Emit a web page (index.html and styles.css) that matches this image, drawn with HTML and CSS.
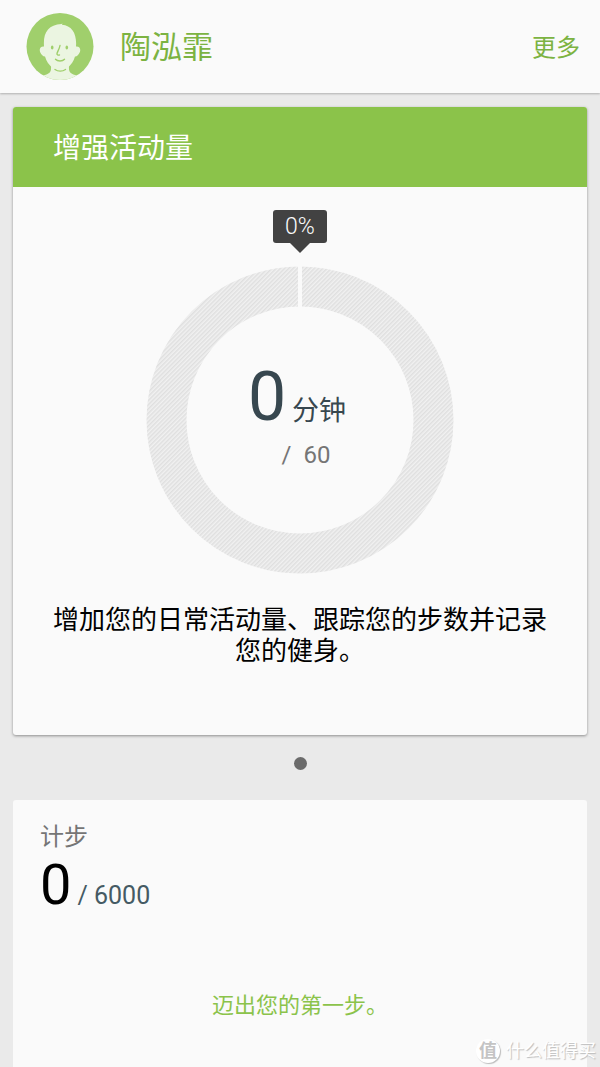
FILE: index.html
```html
<!DOCTYPE html>
<html lang="zh-CN">
<head>
<meta charset="utf-8">
<meta name="viewport" content="width=device-width, initial-scale=1">
<title>增强活动量</title>
<link rel="stylesheet" href="styles.css">
</head>
<body>
<header class="topbar">
  <svg class="avatar" viewBox="0 0 68 68" aria-hidden="true">
    <defs><clipPath id="face-clip"><circle cx="34" cy="34" r="33.5"/></clipPath></defs>
    <circle cx="34" cy="34" r="33.5" fill="#a0cf6c"/>
    <g clip-path="url(#face-clip)">
      <path fill="#ebf5e1" d="M18 34C17 20 22 12.500 35.500 11.500C35.800 11.400 36 11 36.200 10.800C36.300 11.300 36.200 11.700 35.900 12.200C46 13 51 21 50 34C55 33.500 55.500 39 52 42.500C51 43.500 49.800 44 49 44C47.500 49 45 52 43 54C42.500 60 45 61.500 51 63V70H17V63C23 61.500 25.500 60 25 54C23 52 20.500 49 19 44C18 44 17 43.500 16 42.500C12.500 39 13 33.500 18 34Z"/>
      <g fill="none" stroke="#a0cf6c" stroke-width="1.400" stroke-linecap="round">
        <path d="M34 33C33.500 36 31.500 39 31 41C30.800 42.500 32 42.800 33.500 42.500"/>
        <path d="M29.500 46.800C31.500 49 36.500 49 38.500 46.800"/>
        <path d="M29 57C32 59.200 36.500 59.200 39.500 57"/>
      </g>
      <ellipse cx="26.200" cy="35" rx="1.300" ry="2" fill="#a0cf6c"/>
      <ellipse cx="40.800" cy="35" rx="1.300" ry="2" fill="#a0cf6c"/>
    </g>
  </svg>
  <h1 class="name">陶泓霏</h1>
  <button class="more" type="button">更多</button>
</header>
<main class="content">
  <section class="card goal">
    <h2 class="goal-title">增强活动量</h2>
    <div class="goal-body">
      <div class="bubble">0%</div>
      <div class="dial">
        <svg class="ring" viewBox="0 0 308 308" aria-hidden="true">
          <defs>
            <pattern id="hatch" width="3" height="3" patternUnits="userSpaceOnUse" patternTransform="rotate(45)">
              <rect width="3" height="3" fill="#f1f1f1"/>
              <rect width="1.500" height="3" fill="#dfdfdf"/>
            </pattern>
          </defs>
          <circle cx="154" cy="154" r="133.500" fill="none" stroke="url(#hatch)" stroke-width="40"/>
          <rect x="152" y="0" width="4" height="42" fill="#fafafa"/>
        </svg>
        <div class="reading">
          <p class="minutes"><span class="minutes-value">0</span><span class="minutes-unit">分钟</span></p>
          <p class="minutes-goal">/&nbsp; 60</p>
        </div>
      </div>
      <p class="description">增加您的日常活动量、跟踪您的步数并记录您的健身。</p>
    </div>
  </section>
  <div class="pager"><span class="dot"></span></div>
  <section class="card steps">
    <h2 class="steps-title">计步</h2>
    <p class="steps-count"><span class="steps-value">0</span><span class="steps-goal">/ 6000</span></p>
    <p class="steps-hint">迈出您的第一步。</p>
  </section>
</main>
<div class="watermark"><span class="watermark-badge">值</span><span>什么值得买</span></div>
</body>
</html>
```
FILE: styles.css
```css
* {
  box-sizing: border-box;
}

body {
  display: flex;
  flex-direction: column;
  min-height: 100vh;
  margin: 0;
  position: relative;
  background: #eaeaea;
  color: #000;
  font-family: Roboto, "Noto Sans CJK SC", sans-serif;
}

h1, h2, p {
  margin: 0;
  font-weight: 400;
}

.topbar {
  display: flex;
  align-items: center;
  padding: 12px 20px 12px 26px;
  background: #fafafa;
  box-shadow: 0 1px 2px rgba(0, 0, 0, 0.25);
}

.avatar {
  width: 68px;
  height: 69px;
}

.name {
  flex: 1;
  padding-top: 2px;
  margin-left: 26px;
  color: #7cb342;
  font-size: 31px;
  line-height: 40px;
}

.more {
  padding: 2px 0 0;
  border: 0;
  background: none;
  color: #7cb342;
  font: inherit;
  font-size: 24px;
  line-height: 32px;
}

.content {
  flex: 1;
  display: flex;
  flex-direction: column;
  padding: 14px 13px 0;
}

.card {
  background: #fafafa;
  border-radius: 3px;
}

.goal {
  box-shadow: 0 1px 3px rgba(0, 0, 0, 0.4);
}

.goal-title {
  padding: 22px 40px 18px;
  border-radius: 3px 3px 0 0;
  background: #8bc34a;
  color: #fff;
  font-size: 28px;
  line-height: 40px;
}

.goal-body {
  display: flex;
  flex-direction: column;
  align-items: center;
  padding: 23px 40px 68px;
}

.bubble {
  position: relative;
  padding: 1px 12px 0;
  border-radius: 3px;
  background: #424242;
  color: #fafafa;
  font-size: 23px;
  font-weight: 300;
  line-height: 32px;
}

.bubble::after {
  content: "";
  position: absolute;
  top: 100%;
  left: 50%;
  margin-left: -10px;
  border: 10px solid transparent;
  border-top-color: #424242;
  border-bottom: 0;
}

.dial {
  display: grid;
  place-items: center;
  margin-top: 23px;
}

.ring,
.reading {
  grid-area: 1 / 1;
}

.ring {
  width: 308px;
  height: 308px;
}

.reading {
  display: grid;
  justify-items: center;
  gap: 4px;
  padding: 0 6px 10px 0;
}

.minutes {
  display: flex;
  align-items: baseline;
  gap: 6px;
  color: #37474f;
}

.minutes-value {
  font-size: 68px;
  line-height: 76px;
}

.minutes-unit {
  font-size: 27px;
  line-height: 36px;
}

.minutes-goal {
  padding-left: 18px;
  color: #757575;
  font-size: 24px;
  line-height: 32px;
}

.description {
  margin-top: 31px;
  font-size: 26px;
  line-height: 31px;
  text-align: center;
}

.pager {
  display: flex;
  justify-content: center;
  padding: 22px 0 30px;
}

.dot {
  width: 13px;
  height: 13px;
  border-radius: 50%;
  background: #6b6b6b;
}

.steps {
  flex: 1;
  padding: 21px 27px 0;
  border-radius: 3px 3px 0 0;
}

.steps-title {
  color: #757575;
  font-size: 24px;
  line-height: 32px;
}

.steps-count {
  display: flex;
  align-items: baseline;
  gap: 6px;
}

.steps-value {
  font-size: 56px;
  line-height: 64px;
}

.steps-goal {
  color: #455a64;
  font-size: 25px;
}

.steps-hint {
  margin-top: 73px;
  color: #8bc34a;
  font-size: 22px;
  line-height: 32px;
  text-align: center;
}

.watermark {
  position: absolute;
  right: 4px;
  bottom: 4px;
  display: flex;
  align-items: center;
  gap: 6px;
  color: #fff;
  font-size: 18px;
  line-height: 24px;
  text-shadow: 1px 1px 1px #bbb;
}

.watermark-badge {
  width: 24px;
  height: 24px;
  border-radius: 50%;
  background: #fff;
  box-shadow: 1px 1px 1px #bbb;
  color: #c4c4c4;
  font-weight: 700;
  text-align: center;
  text-shadow: none;
}
```
